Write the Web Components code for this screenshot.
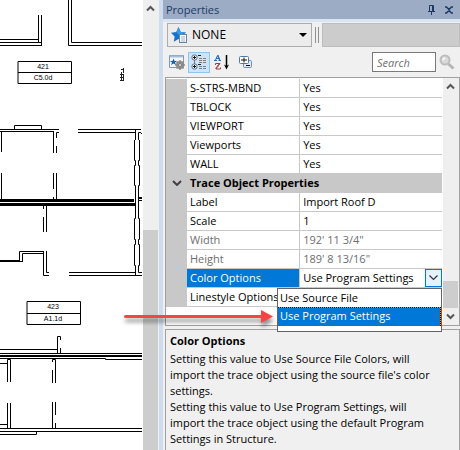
<!DOCTYPE html>
<html lang="en">
<head>
<meta charset="utf-8">
<title>Properties</title>
<style>
  html, body {
    height: 100%;
    margin: 0;
  }

  body {
    display: flex;
    position: relative;
    overflow: hidden;
    background: #fff;
    color: #000;
    font: 12px/16px 'Open Sans', 'Noto Sans', sans-serif;
    --ui-size: 11px;
    --line: #c8c8c8;
    --edge: #a0a0a0;
    --face: #f0f0f0;
    --accent: #0078d7;
  }

  floor-plan {
    flex: 143 1 0;
  }

  dock-splitter {
    flex: 0 0 4px;
  }

  properties-panel {
    flex: 297 1 0;
  }
</style>
</head>
<body>
  <floor-plan></floor-plan>
  <scroll-bar class="view" start="230" label="Drawing"></scroll-bar>
  <dock-splitter></dock-splitter>
  <properties-panel heading="Properties">
    <object-picker slot="picker"></object-picker>
    <property-toolbar slot="tools"></property-toolbar>
    <property-grid slot="grid"></property-grid>
    <property-help slot="help">
      <span slot="title">Color Options</span>
      Setting this value to Use Source File Colors, will import the trace object using the source file's color settings.<br>
      Setting this value to Use Program Settings, will import the trace object using the default Program Settings in Structure.
    </property-help>
  </properties-panel>
  <callout-arrow></callout-arrow>

<script>
class FloorPlan extends HTMLElement {
  constructor() {
    super()
    this.attachShadow({ mode: 'open' })
  }
  connectedCallback() {
    this.shadowRoot.innerHTML = `<style>
      :host {
        display: block;
        min-width: 0;
        overflow: hidden;
        background: #fff;
      }
      svg {
        display: block;
        width: 100%;
        height: 100%;
      }
      .walls {
        fill: none;
        stroke: #000;
        stroke-linecap: square;
      }
      text {
        font: 7px 'Liberation Sans', sans-serif;
        text-anchor: middle;
      }
    </style>
    <svg viewBox="0 0 143 450" preserveAspectRatio="xMinYMin slice" role="img" aria-label="Floor plan">
      <g class="walls" transform="translate(.5 .5)">
        <!-- upper rooms -->
        <path d="M38 15V41M41 15V45M0 39H38M0 42H41M0 45H41M68 0V45H141M71 0V42H141"/>
        <!-- room tags -->
        <path d="M18 61H71V83H18ZM18 72H71M27 301H80V324H27ZM27 313H80"/>
        <!-- middle rooms -->
        <path d="M14 128V125H41V128M0 129H58M0 131H53M1 131V151M1 173V199M53 131V152M53 173V188M53 197V199M58 132H56V137M56 146V152M56 173V199"/>
        <path d="M78 129H140M78 132H135M135 130V139M138 139V132H140M141 133H141"/>
        <path d="M134 140V160H135V165H134V185H135V218H134V239H135V244H134V265H135V275M139 140V160H138V165H139V185H138V218H139V239H138V244H139V265H138V272H141"/>
        <path d="M138 197H141M138 198H141M138 200H141M69 272H135M69 275H141"/>
        <path d="M0 199H133M0 200H133M0 201H133M0 203H135M0 204H135M0 205H135"/>
        <!-- stair lobby -->
        <path d="M43 205V208M46 205V231M43 217V231M48 275H43V251M46 251V272H48M43 251H19V260M43 253H22V261M0 260H19M0 261H22"/>
        <!-- lower rooms -->
        <path d="M57 353V336H60V339M60 348V353M0 349H57M0 353H141M0 355H141M0 356H141M0 358H105V359H141"/>
        <path d="M7 381V359H10V381M0 363H7M52 361V359H55V382M52 370V382"/>
        <path d="M7 403V428M10 403V428M0 424H7M52 402V428M55 402V414M55 423V428M0 428H141M0 431H141M36 431V434H0"/>
      </g>
      <text x="43" y="69">421</text>
      <text x="43" y="80">C5.0d</text>
      <text x="53" y="309">423</text>
      <text x="53" y="321">A1.1d</text>
      <!-- door swing mark, too small to read at this scale -->
      <path d="M123.500 68V73M121 69.500H123M123.500 75V81M121.500 72V81M120 74.500H124M120 77.500H124M120 80.500H123" fill="none" stroke="#222"/>
    </svg>`
  }
}

class ScrollBar extends HTMLElement {
  constructor() {
    super()
    this.attachShadow({ mode: 'open' })
  }
  connectedCallback() {
    const label = this.getAttribute('label')
    const start = this.getAttribute('start')
    const size = this.getAttribute('size')
    const isView = this.classList.contains('view')
    this.shadowRoot.innerHTML = `<style>
      :host {
        display: flex;
        flex: 0 0 16px;
        flex-direction: column;
        background: #efefef;
      }
      button {
        display: block;
        flex: none;
        width: 16px;
        height: 17px;
        padding: 0;
        border: 0;
        background: none;
      }
      svg {
        display: block;
        width: 16px;
        height: 17px;
        fill: none;
        stroke: #555;
        stroke-width: 2;
      }
      .track {
        display: flex;
        flex: 1;
        flex-direction: column;
        min-height: 0;
      }
      .gap {
        flex: 0 0 ${start - 17}px;
      }
      .thumb {
        flex: ${size ? `0 0 ${size}px` : '1'};
        width: 15px;
        background: #cdcdcd;
      }
    </style>
    <button type="button" aria-label="${label} scroll up">
      <svg viewBox="0 0 16 17"><path d="M4 10.500L7.500 7L11 10.500"/></svg>
    </button>
    <div class="track"><div class="gap"></div><div class="thumb"></div></div>
    ${isView ? '' : `<button type="button" aria-label="${label} scroll down">
      <svg viewBox="0 0 16 17"><path d="M4 6.500L7.500 10L11 6.500"/></svg>
    </button>`}`
  }
}

class DockSplitter extends HTMLElement {
  constructor() {
    super()
    this.attachShadow({ mode: 'open' })
    this.shadowRoot.innerHTML = `<style>
      :host {
        display: block;
        background: #cfdcee;
      }
    </style>`
  }
}

class PropertiesPanel extends HTMLElement {
  constructor() {
    super()
    this.attachShadow({ mode: 'open' })
  }
  connectedCallback() {
    this.shadowRoot.innerHTML = `<style>
      :host {
        display: flex;
        flex-direction: column;
        min-width: 0;
        background: var(--face);
      }
      header {
        display: flex;
        align-items: center;
        height: 19px;
        padding: 0 2px 0 3px;
        border-bottom: 3px solid #dae5f3;
        background: #9bacc4;
        color: #1e3968;
      }
      h1 {
        flex: 1;
        margin: 0;
        font-size: var(--ui-size);
        font-weight: 400;
      }
      header button {
        width: 18px;
        height: 18px;
        padding: 0;
        border: 0;
        background: none;
      }
      header svg {
        display: block;
        margin: auto;
        fill: none;
        stroke: #1e3968;
      }
      .body {
        display: flex;
        flex: 1;
        flex-direction: column;
        min-height: 0;
        padding: 1px 0 0 2px;
      }
      ::slotted([slot='grid']) {
        flex: 1;
        min-height: 0;
      }
      ::slotted([slot='help']) {
        margin-top: 3px;
      }
    </style>
    <header>
      <h1>${this.getAttribute('heading')}</h1>
      <button type="button" aria-label="Pin">
        <svg width="10" height="12" viewBox="0 0 10 12"><path d="M3.500 7V1.500H7.500V7M6.500 2V7M2 7.500H9M5.500 8V11"/></svg>
      </button>
      <button type="button" aria-label="Close">
        <svg width="10" height="10" viewBox="0 0 10 10"><path d="M1 2H2.500L5 4.500L7.500 2H9M1 8H2.500L5 5.500L7.500 8H9" stroke-width="1.500"/></svg>
      </button>
    </header>
    <div class="body">
      <slot name="picker"></slot>
      <slot name="tools"></slot>
      <slot name="grid"></slot>
      <slot name="help"></slot>
    </div>`
  }
}

class ObjectPicker extends HTMLElement {
  constructor() {
    super()
    this.attachShadow({ mode: 'open' })
  }
  connectedCallback() {
    this.shadowRoot.innerHTML = `<style>
      :host {
        display: flex;
        height: 24px;
        padding-left: 2px;
      }
      .combo {
        box-sizing: border-box;
        display: flex;
        flex: 141 1 0;
        align-items: center;
        min-width: 0;
        padding: 0 4px 0 3px;
        border: 1px solid #acacac;
        background: #ececec;
      }
      select {
        flex: 1;
        min-width: 0;
        padding: 0 0 0 5px;
        border: 0;
        appearance: none;
        background: none;
        color: #000;
        font: inherit;
      }
      .grip {
        flex: none;
        width: 2px;
        margin: 4px 3px;
        border: solid #909090;
        border-width: 0 1px;
      }
      .blank {
        box-sizing: border-box;
        flex: 142 1 0;
        border: 1px solid #bdbdbd;
        background: #ccc;
      }
    </style>
    <div class="combo">
      <svg width="16" height="16" viewBox="0 0 16 16">
        <path d="M7.500 0L9.800 4.900L15 5.500L11.200 9.200L12.200 14.500L7.500 12L2.800 14.800L3.600 9.400L0 5.700L5.300 4.900Z" fill="#1674c8"/>
        <path d="M7.500 0L9.800 4.900L15 5.500L8 8L5.300 4.900Z" fill="#3d9ae4"/>
        <rect x="8.500" y="7.500" width="7" height="8" fill="#fff" stroke="#6385ad"/>
        <path d="M10 10H14M10 12H14M10 14H14" stroke="#9db1ca"/>
      </svg>
      <select aria-label="Object type"><option>NONE</option></select>
      <svg width="8" height="4" viewBox="0 0 8 4"><path d="M0 0H8L4 4Z"/></svg>
    </div>
    <div class="grip"></div>
    <div class="blank"></div>`
  }
}

class PropertyToolbar extends HTMLElement {
  constructor() {
    super()
    this.attachShadow({ mode: 'open' })
  }
  connectedCallback() {
    this.shadowRoot.innerHTML = `<style>
      :host {
        display: flex;
        align-items: center;
        height: 30px;
        padding-left: 1px;
      }
      button {
        display: flex;
        box-sizing: border-box;
        align-items: center;
        justify-content: center;
        flex: none;
        width: 22px;
        height: 21px;
        margin-right: 2px;
        padding: 0;
        border: 0;
        background: none;
      }
      .active {
        margin: 0 1px 0 0;
        border: 1px solid #92c5ec;
        background: #cce4f7;
      }
      .object {
        margin-right: 0;
      }
      .find {
        width: 18px;
        margin: 0 4px 0 2px;
      }
      svg {
        flex: none;
      }
      input {
        box-sizing: border-box;
        width: 64px;
        height: 20px;
        margin-left: auto;
        padding: 0 4px;
        border: 1px solid #7a7a7a;
        background: #fff;
        font: italic var(--ui-size) 'Open Sans', sans-serif;
      }
      input::placeholder {
        color: #707070;
      }
    </style>
    <button class="object" type="button" aria-label="Object properties">
      <svg width="16" height="15" viewBox="0 0 16 15">
        <path d="M.5 .5H14.500V12.500H.5Z" fill="#f4f7fb" stroke="#8297b4"/>
        <path d="M1 1.500H14" stroke="#a9bcd4" stroke-width="2"/>
        <path d="M4.500 3.500L5.500 6H8L6 7.500L7 10L4.500 8.500L2 10L3 7.500L1 6H3.500Z" fill="#1260ae"/>
        <path d="M11 5V15M6 10H16M7.500 6.500L14.500 13.500M14.500 6.500L7.500 13.500" stroke="#8a8a8a" stroke-width="1.500"/>
        <circle cx="11" cy="10" r="3" fill="#bbb" stroke="#8a8a8a" stroke-width="2"/>
        <circle cx="11" cy="10" r="1.500" fill="#eee" stroke="#777"/>
      </svg>
    </button>
    <button class="active" type="button" aria-label="Categorized" aria-pressed="true">
      <svg width="16" height="16" viewBox="0 0 16 16" fill="none">
        <path d="M3.500 5V11" stroke="#6a7f9c"/>
        <rect x="1" y="1" width="5" height="5" rx="2" fill="#fff" stroke="#54709a"/>
        <rect x="1" y="10" width="5" height="5" rx="2" fill="#fff" stroke="#54709a"/>
        <path d="M2 3.500H5M3.500 2V5M2 12.500H5M3.500 11V14" stroke="#111"/>
        <path d="M7 1.500H10M7 10.500H10" stroke="#222"/>
        <path d="M8 4.500H11M12 4.500H15M8 6.500H11M12 6.500H15M8 8.500H11M12 8.500H15M8 12.500H11M12 12.500H15M8 14.500H11M12 14.500H15" stroke="#808080"/>
      </svg>
    </button>
    <button type="button" aria-label="Alphabetical">
      <svg width="16" height="16" viewBox="0 0 16 16" fill="none">
        <path d="M1.500 6L3.500 1.500L5.500 6M2 4.500H5M0 6.500H3M4.500 6.500H7" stroke="#3567a8"/>
        <path d="M4 1L6 6.500" stroke="#3567a8"/>
        <path d="M1.500 11V9.500H6L2 15H6.500V13.500M5.500 9.500L1.500 14.500" stroke="#a13c4b"/>
        <path d="M12.500 1V12" stroke="#000" stroke-width="1.500"/>
        <path d="M10 10.500L12.500 12L15 10.500L12.500 15.500Z" fill="#000"/>
      </svg>
    </button>
    <button type="button" aria-label="Expand all">
      <svg width="14" height="14" viewBox="0 0 14 14">
        <rect x="4.500" y="5.500" width="8" height="7" rx="1" fill="#dce9f6" stroke="#6f8fb6"/>
        <rect x=".5" y="1.500" width="9" height="7" rx="1" fill="#fff" stroke="#5478a6"/>
        <path d="M2 5H8M5 2.500V7.500M7 10.500H11" stroke="#111"/>
      </svg>
    </button>
    <input type="search" aria-label="Search" placeholder="Search">
    <button class="find" type="button" aria-label="Find">
      <svg width="16" height="16" viewBox="0 0 16 16">
        <path d="M9.500 10L14.500 14.500" stroke="#b5b5b5" stroke-width="3"/>
        <circle cx="6" cy="6" r="4.500" fill="#d9d9d9" stroke="#bdbdbd" stroke-width="2"/>
        <path d="M3.500 6L6 3.500" stroke="#f4f4f4" stroke-width="2"/>
      </svg>
    </button>`
  }
}

const layerRows = [
  ['S-STRS-MBND', 'Yes'],
  ['TBLOCK', 'Yes'],
  ['VIEWPORT', 'Yes'],
  ['Viewports', 'Yes'],
  ['WALL', 'Yes'],
]

const traceRows = [
  ['Label', 'Import Roof D'],
  ['Scale', '1'],
  ['Width', `192' 11 3/4"`, 'readonly'],
  ['Height', `189' 8 13/16"`, 'readonly'],
  ['Color Options', '<option-list></option-list>', 'selected'],
  ['Linestyle Options', ''],
]

const row = ([name, value, state = '']) => `
  <tr class="${state}"><td class="gutter"></td><th scope="row">${name}</th><td class="value">${value}</td></tr>`

class PropertyGrid extends HTMLElement {
  constructor() {
    super()
    this.attachShadow({ mode: 'open' })
  }
  connectedCallback() {
    this.shadowRoot.innerHTML = `<style>
      :host {
        box-sizing: border-box;
        display: flex;
        border: 1px solid var(--edge);
        background: #fff;
        font-size: var(--ui-size);
      }
      .rows {
        flex: 1;
        min-width: 0;
        padding-top: 1px;
      }
      table {
        width: 100%;
        border-collapse: separate;
        border-spacing: 0;
        table-layout: fixed;
      }
      .c1 { width: 21px; }
      .c2 { width: 41%; }
      th, td {
        box-sizing: border-box;
        height: 19px;
        padding: 0 0 0 3px;
        border-bottom: 1px solid var(--line);
        font-weight: 400;
        line-height: 18px;
        text-align: left;
        white-space: nowrap;
      }
      .gutter {
        padding: 0;
        background: var(--line);
      }
      th {
        border-right: 1px solid var(--line);
      }
      .category th, .category td {
        background: var(--line);
        font-weight: 700;
      }
      .category button {
        display: block;
        width: 21px;
        height: 18px;
        padding: 0;
        border: 0;
        background: none;
      }
      .category svg {
        display: block;
        margin: auto;
      }
      .readonly {
        color: #6d6d6d;
      }
      .selected th {
        background: var(--accent);
        color: #fff;
      }
      .selected .value {
        padding: 0;
      }
      scroll-bar {
        margin-left: 1px;
      }
    </style>
    <div class="rows">
      <table aria-label="Object properties">
        <colgroup><col class="c1"><col class="c2"><col></colgroup>
        <tbody>${layerRows.map(row).join('')}</tbody>
        <tbody>
          <tr class="category">
            <td class="gutter">
              <button type="button" aria-label="Collapse category" aria-expanded="true">
                <svg width="10" height="6" viewBox="0 0 10 6" fill="none"><path d="M1 1L5 5L9 1" stroke="#404040" stroke-width="2"/></svg>
              </button>
            </td>
            <th colspan="2" scope="rowgroup">Trace Object Properties</th>
          </tr>
          ${traceRows.map(row).join('')}
        </tbody>
      </table>
    </div>
    <scroll-bar start="203" size="27" label="Properties"></scroll-bar>`
  }
}

class OptionList extends HTMLElement {
  constructor() {
    super()
    this.attachShadow({ mode: 'open' })
  }
  connectedCallback() {
    this.shadowRoot.innerHTML = `<style>
      :host {
        display: flex;
        position: relative;
        height: 18px;
      }
      select {
        flex: 1;
        min-width: 0;
        padding: 0 0 0 3px;
        border: 0;
        appearance: none;
        background: none;
        color: #000;
        font: inherit;
      }
      button {
        display: flex;
        box-sizing: border-box;
        align-items: center;
        justify-content: center;
        flex: none;
        width: 17px;
        height: 18px;
        padding: 0;
        border: 1px solid var(--accent);
        background: #e5f1fb;
      }
      /* the list hangs below the cell, over the rows and the help text */
      ul {
        box-sizing: border-box;
        position: absolute;
        z-index: 1;
        top: 100%;
        right: 0;
        width: 165px;
        margin: 1px 0 0;
        padding: 0 0 5px;
        border: 1px solid #646464;
        background: #fff;
        list-style: none;
      }
      li {
        box-sizing: border-box;
        height: 18px;
        padding-left: 2px;
        line-height: 18px;
      }
      /* focus dots along the top and right edges */
      li[aria-selected='true'] {
        height: 19px;
        background:
          repeating-linear-gradient(90deg, #000 0 1px, #ff8728 1px 2px) top / 100% 1px no-repeat,
          repeating-linear-gradient(#000 0 1px, #ff8728 1px 2px) right / 1px 100% no-repeat,
          var(--accent);
        color: #fff;
      }
    </style>
    <select aria-label="Color Options">
      <option>Use Source File</option>
      <option selected>Use Program Settings</option>
    </select>
    <button type="button" aria-label="Open list" aria-expanded="true">
      <svg width="9" height="6" viewBox="0 0 9 6" fill="none"><path d="M.5 .5L4.500 4.500L8.500 .5" stroke="#333" stroke-width="1.200"/></svg>
    </button>
    <ul role="listbox" aria-label="Color Options">
      <li role="option" aria-selected="false">Use Source File</li>
      <li role="option" aria-selected="true">Use Program Settings</li>
    </ul>`
  }
}

class PropertyHelp extends HTMLElement {
  constructor() {
    super()
    this.attachShadow({ mode: 'open' })
  }
  connectedCallback() {
    this.shadowRoot.innerHTML = `<style>
      :host {
        box-sizing: border-box;
        display: block;
        padding: 3px 16px 3px 4px;
        border: solid var(--edge);
        border-width: 1px 1px 0;
        font-size: var(--ui-size);
      }
      h2 {
        margin: 0 0 2px;
        font: inherit;
        font-weight: 700;
      }
      p {
        margin: 0;
      }
    </style>
    <h2><slot name="title"></slot></h2>
    <p><slot></slot></p>`
  }
}

class CalloutArrow extends HTMLElement {
  constructor() {
    super()
    this.attachShadow({ mode: 'open' })
    this.shadowRoot.innerHTML = `<style>
      :host {
        display: block;
        position: absolute;
        z-index: 2;
        top: 306px;
        left: 120px;
        pointer-events: none;
      }
      svg {
        display: block;
        overflow: visible;
        filter: drop-shadow(1px 4px 2px rgba(0, 0, 0, .45));
      }
    </style>
    <svg width="156" height="24" viewBox="0 0 156 24">
      <path d="M5.500 10.500H142" stroke="#fa4343" stroke-width="3" stroke-linecap="round"/>
      <path d="M141 4L153 10.500L141 17Z" fill="#fa4343"/>
    </svg>`
  }
}

customElements.define('floor-plan', FloorPlan)
customElements.define('scroll-bar', ScrollBar)
customElements.define('dock-splitter', DockSplitter)
customElements.define('object-picker', ObjectPicker)
customElements.define('property-toolbar', PropertyToolbar)
customElements.define('option-list', OptionList)
customElements.define('property-grid', PropertyGrid)
customElements.define('property-help', PropertyHelp)
customElements.define('properties-panel', PropertiesPanel)
customElements.define('callout-arrow', CalloutArrow)
</script>
</body>
</html>
